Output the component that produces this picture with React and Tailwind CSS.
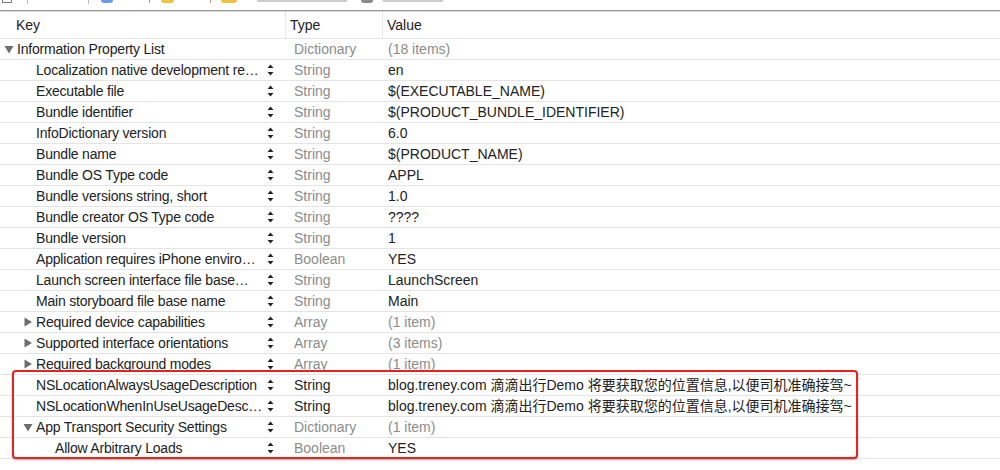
import React from 'react';

const rows = [
  { key: 'Information Property List', type: 'Dictionary', value: '(18 items)', depth: 0, tri: 'down', noStep: true, valueDim: true },
  { key: 'Localization native development re…', type: 'String', value: 'en', depth: 1 },
  { key: 'Executable file', type: 'String', value: '$(EXECUTABLE_NAME)', depth: 1 },
  { key: 'Bundle identifier', type: 'String', value: '$(PRODUCT_BUNDLE_IDENTIFIER)', depth: 1 },
  { key: 'InfoDictionary version', type: 'String', value: '6.0', depth: 1 },
  { key: 'Bundle name', type: 'String', value: '$(PRODUCT_NAME)', depth: 1 },
  { key: 'Bundle OS Type code', type: 'String', value: 'APPL', depth: 1 },
  { key: 'Bundle versions string, short', type: 'String', value: '1.0', depth: 1 },
  { key: 'Bundle creator OS Type code', type: 'String', value: '????', depth: 1 },
  { key: 'Bundle version', type: 'String', value: '1', depth: 1 },
  { key: 'Application requires iPhone enviro…', type: 'Boolean', value: 'YES', depth: 1 },
  { key: 'Launch screen interface file base…', type: 'String', value: 'LaunchScreen', depth: 1 },
  { key: 'Main storyboard file base name', type: 'String', value: 'Main', depth: 1 },
  { key: 'Required device capabilities', type: 'Array', value: '(1 item)', depth: 1, tri: 'right', valueDim: true },
  { key: 'Supported interface orientations', type: 'Array', value: '(3 items)', depth: 1, tri: 'right', valueDim: true },
  { key: 'Required background modes', type: 'Array', value: '(1 item)', depth: 1, tri: 'right', valueDim: true },
  { key: 'NSLocationAlwaysUsageDescription', type: 'String', value: 'blog.treney.com 滴滴出行Demo 将要获取您的位置信息,以便司机准确接驾~', depth: 1, typeDark: true },
  { key: 'NSLocationWhenInUseUsageDesc…', type: 'String', value: 'blog.treney.com 滴滴出行Demo 将要获取您的位置信息,以便司机准确接驾~', depth: 1, typeDark: true },
  { key: 'App Transport Security Settings', type: 'Dictionary', value: '(1 item)', depth: 1, tri: 'down', valueDim: true },
  { key: 'Allow Arbitrary Loads', type: 'Boolean', value: 'YES', depth: 2 },
];

const indent = ['pl-[4px]', 'pl-[23px]', 'pl-[42px]'];

const Triangle = ({ dir }) => {
  if (dir === 'down') {
    return (
      <svg width="10" height="9" viewBox="0 0 10 9" className="block">
        <path d="M0.5 1 L9.5 1 L5 8.5 Z" fill="#6e6e6e" />
      </svg>
    );
  }
  return (
    <svg width="10" height="10" viewBox="0 0 10 10" className="block">
      <path d="M1.5 0.5 L9 5 L1.5 9.5 Z" fill="#6e6e6e" />
    </svg>
  );
};

const Stepper = () => (
  <svg width="7" height="14" viewBox="0 0 7 14" className="block">
    <path d="M3.5 1.5 L6.5 5 L0.5 5 Z" fill="#222" />
    <path d="M0.5 9 L6.5 9 L3.5 12.5 Z" fill="#222" />
  </svg>
);

const App = () => {
  return (
    <div
      className="relative w-[1000px] h-[470px] bg-white overflow-hidden text-[14px] text-[#222]"
      style={{ fontFamily: '"Liberation Sans", "Noto Sans CJK SC", sans-serif' }}
    >
      {/* cut off breadcrumb bar */}
      <div className="h-[10px] flex items-start">
        <div className="ml-[2px] w-[10px] h-[3px] border-x border-b border-[#777]" />
        <div className="ml-[15px] w-px h-[4px] bg-[#bbb]" />
        <div className="ml-[60px] w-px h-[4px] bg-[#bbb]" />
        <div className="ml-[12px] w-[12px] h-[3px] bg-[#6d9ae8] rounded-b-sm" />
        <div className="ml-[36px] w-px h-[3px] bg-[#999]" />
        <div className="ml-[11px] w-[13px] h-[3px] bg-[#f0c33c] rounded-b-sm" />
        <div className="ml-[36px] w-px h-[3px] bg-[#999]" />
        <div className="ml-[10px] w-[16px] h-[3px] bg-[#f0c33c] rounded-b-sm" />
        <div className="ml-[20px] w-[90px] h-[2px] bg-[#ccc]" />
        <div className="ml-[14px] w-[12px] h-[3px] bg-[#8a8a8a] rounded-b-sm" />
        <div className="ml-[10px] w-[60px] h-[2px] bg-[#ccc]" />
      </div>
      <div className="h-px bg-[#9a9a9a]" />
      <div className="h-px bg-[#d6d6d6]" />

      {/* header */}
      <div className="flex h-[27px] items-center border-b border-[#e6e6e6]">
        <div className="w-[286px] h-full flex items-center pl-[16px] border-r border-[#e8e8e8]">Key</div>
        <div className="w-[97px] h-full flex items-center pl-[4px] border-r border-[#e8e8e8]">Type</div>
        <div className="flex-1 h-full flex items-center pl-[4px]">Value</div>
      </div>

      {/* rows */}
      {rows.map((r, i) => (
        <div key={i} className="flex h-[21px] items-center border-b border-[#e4e4e4]">
          <div className={`w-[286px] flex items-center ${indent[r.depth]}`}>
            <div className="w-[13px] flex items-center">{r.tri && <Triangle dir={r.tri} />}</div>
            <div className="flex-1 min-w-0 whitespace-nowrap overflow-hidden tracking-[-0.2px]">{r.key}</div>
            <div className="w-[7px] ml-[2px] mr-[12px]">{!r.noStep && <Stepper />}</div>
          </div>
          <div className={`w-[97px] pl-[8px] ${r.typeDark ? 'text-[#222]' : 'text-[#8c8c8c]'}`}>{r.type}</div>
          <div className={`flex-1 pl-[5px] whitespace-nowrap ${r.valueDim ? 'text-[#8c8c8c]' : 'text-[#222]'}`}>{r.value}</div>
        </div>
      ))}

      {/* red annotation box */}
      <div className="absolute left-[12px] top-[370px] w-[846px] h-[89px] border-2 border-[#e52420] rounded-[4px] shadow-[0_1px_2px_rgba(0,0,0,0.35)]" />
    </div>
  );
};

export default App;
